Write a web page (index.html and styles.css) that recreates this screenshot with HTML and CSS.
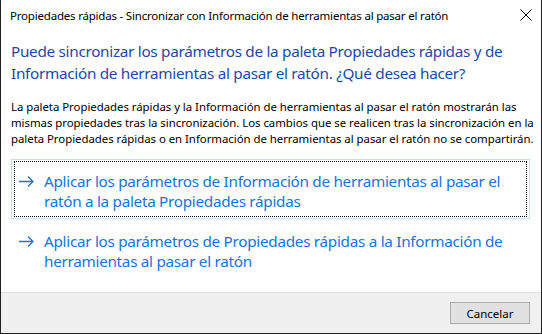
FILE: index.html
```html
<!DOCTYPE html>
<html lang="es">
<head>
    <meta charset="UTF-8">
    <title>Propiedades rápidas - Sincronizar</title>
    <link rel="stylesheet" href="styles.css">
</head>
<body>
    <div class="dialog">
        <div class="titlebar">
            <span class="title">Propiedades rápidas - Sincronizar con Información de herramientas al pasar el ratón</span>
            <span class="close">
                <svg width="12" height="12" viewBox="0 0 12 12"><path d="M0.5 0.5 L11.5 11.5 M11.5 0.5 L0.5 11.5" stroke="#000" stroke-width="1" fill="none"/></svg>
            </span>
        </div>

        <div class="content">
            <h1 class="instruction">Puede sincronizar los parámetros de la paleta Propiedades rápidas y de<br>Información de herramientas al pasar el ratón. ¿Qué desea hacer?</h1>
            <p class="note">La paleta Propiedades rápidas y la Información de herramientas al pasar el ratón mostrarán las<br>mismas propiedades tras la sincronización. Los cambios que se realicen tras la sincronización en la<br>paleta Propiedades rápidas o en Información de herramientas al pasar el ratón no se compartirán.</p>

            <div class="links">
                <a class="cmd-link focused" href="#">
                    <span class="inner">
                        <svg class="arrow" width="15" height="11" viewBox="0 0 15 11"><path d="M0 5.5 H14 M9 0.5 L14 5.5 L9 10.5" stroke="#1a73d9" stroke-width="1.3" fill="none"/></svg>
                        <span class="label">Aplicar los parámetros de Información de herramientas al pasar el<br>ratón a la paleta Propiedades rápidas</span>
                    </span>
                </a>
                <a class="cmd-link" href="#">
                    <span class="inner">
                        <svg class="arrow" width="15" height="11" viewBox="0 0 15 11"><path d="M0 5.5 H14 M9 0.5 L14 5.5 L9 10.5" stroke="#1a73d9" stroke-width="1.3" fill="none"/></svg>
                        <span class="label">Aplicar los parámetros de Propiedades rápidas a la Información de<br>herramientas al pasar el ratón</span>
                    </span>
                </a>
            </div>
        </div>

        <div class="footer">
            <button class="btn">Cancelar</button>
        </div>
    </div>
</body>
</html>
```

FILE: styles.css
```css
* {
    margin: 0;
    padding: 0;
    box-sizing: border-box;
}
body {
    font-family: "Noto Sans", "Open Sans", sans-serif;
    background: #fff;
}
.dialog {
    width: 542px;
    height: 334px;
    display: flex;
    flex-direction: column;
    background: #fff;
    border: 1px solid #1f1f1f;
    border-top: none;
}
.titlebar {
    flex: none;
    height: 31px;
    display: flex;
    align-items: center;
    justify-content: space-between;
    padding: 0 8px 1px 9px;
}
.title {
    font-size: 11.5px;
    color: #000;
    letter-spacing: -0.2px;
}
.close {
    display: flex;
    margin-right: 1px;
}
.content {
    flex: 1;
    padding: 9px 11px 0 10px;
}
.instruction {
    font-size: 15.3px;
    font-weight: normal;
    line-height: 22px;
    color: #1b4aa6;
    letter-spacing: -0.3px;
    white-space: nowrap;
}
.note {
    margin-top: 15px;
    font-size: 11.4px;
    line-height: 16px;
    color: #000;
    letter-spacing: -0.03px;
    white-space: nowrap;
}
.links {
    margin-top: 12px;
    display: flex;
    flex-direction: column;
}
.cmd-link {
    display: block;
    padding: 1px 2px;
    border: 1px solid transparent;
    text-decoration: none;
    color: #1a73d9;
}
.cmd-link.focused {
    border-color: #c4dff5;
}
.cmd-link .inner {
    display: flex;
    align-items: flex-start;
    gap: 10px;
    padding: 9px 4px 5px 4px;
    border: 1px dotted transparent;
}
.cmd-link.focused .inner {
    border-color: #000;
}
.arrow {
    flex: none;
    margin-top: 5px;
}
.label {
    font-size: 15.3px;
    line-height: 20px;
    letter-spacing: -0.3px;
    white-space: nowrap;
}
.footer {
    flex: none;
    height: 41px;
    background: #f0f0f0;
    border-top: 1px solid #dfdfdf;
    display: flex;
    justify-content: flex-end;
    align-items: flex-start;
    padding: 9px 11px 0 0;
}
.btn {
    width: 80px;
    height: 22px;
    background: #e1e1e1;
    border: 1px solid #adadad;
    font-family: "Noto Sans", "Open Sans", sans-serif;
    font-size: 11.5px;
    color: #000;
}
```
